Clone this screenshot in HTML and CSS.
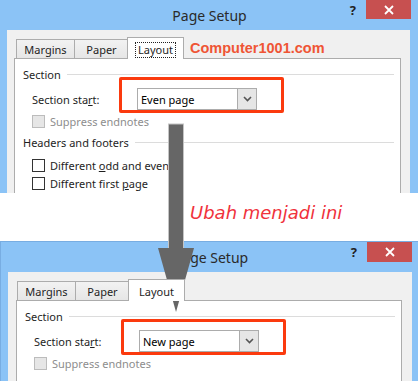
FILE: index.html
```html
<!DOCTYPE html>
<html>
<head>
<meta charset="utf-8">
<link rel="stylesheet" href="styles.css">
</head>
<body>
    <div class="dialog upper">
        <div class="titlebar">
            <span class="title">Page Setup</span>
            <div class="controls">
                <span class="help">?</span>
                <span class="close">
                    <svg width="10" height="10" viewBox="0 0 10 10"><path d="M1 1 L9 9 M9 1 L1 9" stroke="#fff" stroke-width="1.8"/></svg>
                </span>
            </div>
        </div>
        <div class="frame">
            <div class="tabs">
                <div class="tab margins">Margins</div>
                <div class="tab paper">Paper</div>
                <div class="tab active"><span class="focus">Layout</span></div>
                <div class="brand">Computer1001.com</div>
            </div>
            <div class="panel">
                <div class="group">Section</div>
                <div class="row">
                    <span class="label">Section sta<u>r</u>t:</span>
                    <div class="select">
                        <span class="value">Even page</span>
                        <span class="drop"><svg width="9" height="6" viewBox="0 0 9 6"><path d="M1 1 L4.5 4.5 L8 1" fill="none" stroke="#555" stroke-width="1.6"/></svg></span>
                        <div class="highlight"></div>
                    </div>
                </div>
                <div class="check disabled"><span class="box"></span><span>Suppress endnotes</span></div>
                <div class="group second">Headers and footers</div>
                <div class="check odd"><span class="box"></span><span>Different <u>o</u>dd and even</span></div>
                <div class="check first"><span class="box"></span><span>Different first <u>p</u>age</span></div>
            </div>
        </div>
    </div>

    <div class="note">Ubah menjadi ini</div>

    <div class="dialog lower">
        <div class="titlebar">
            <span class="title">Page Setup</span>
            <div class="controls">
                <span class="help">?</span>
                <span class="close">
                    <svg width="10" height="10" viewBox="0 0 10 10"><path d="M1 1 L9 9 M9 1 L1 9" stroke="#fff" stroke-width="1.8"/></svg>
                </span>
            </div>
        </div>
        <div class="frame">
            <div class="tabs">
                <div class="tab margins">Margins</div>
                <div class="tab paper">Paper</div>
                <div class="tab active"><span class="plain">Layout</span></div>
            </div>
            <div class="panel">
                <div class="group">Section</div>
                <div class="row">
                    <span class="label">Section sta<u>r</u>t:</span>
                    <div class="select">
                        <span class="value">New page</span>
                        <span class="drop"><svg width="9" height="6" viewBox="0 0 9 6"><path d="M1 1 L4.5 4.5 L8 1" fill="none" stroke="#555" stroke-width="1.6"/></svg></span>
                        <div class="highlight"></div>
                    </div>
                </div>
                <div class="check disabled"><span class="box"></span><span>Suppress endnotes</span></div>
            </div>
        </div>
    </div>

    <svg class="arrow" width="40" height="192" viewBox="0 0 40 192">
        <rect x="12.5" y="2" width="15" height="126" fill="#666" stroke="#c4c4c4" stroke-width="1"/>
        <polygon points="2,126 38,126 20,190" fill="#666"/>
    </svg>
</body>
</html>
```

FILE: styles.css
```css
body {
    margin: 0;
    width: 418px;
    height: 381px;
    overflow: hidden;
    position: relative;
    background: #fff;
    font-family: "Noto Sans", "Open Sans", sans-serif;
    font-size: 11px;
    color: #1e1e1e;
}

.dialog {
    background: #8bc3f6;
    overflow: hidden;
}
.dialog.upper {
    height: 193px;
    padding: 0 8px 0 7px;
}
.dialog.lower {
    height: 139px;
    border-top: 1px solid #78ade2;
    border-left: 1px solid #78ade2;
    padding: 0 6px 0 7px;
}

.titlebar {
    height: 30px;
    display: grid;
    grid-template-columns: 1fr auto 1fr;
    align-items: center;
}
.title {
    grid-column: 2;
    font-size: 14px;
    color: #2a2a2a;
    padding-left: 2px;
}
.controls {
    grid-column: 3;
    align-self: start;
    display: flex;
    justify-content: flex-end;
    align-items: flex-start;
}
.help {
    font-weight: bold;
    font-size: 13px;
    line-height: 20px;
    color: #222;
    margin-right: 10px;
}
.close {
    width: 45px;
    height: 19px;
    background: #c75050;
    display: flex;
    align-items: center;
    justify-content: center;
    margin-right: -1px;
}
.lower .close {
    height: 20px;
    margin-right: 0;
}

.frame {
    background: #f0f0f0;
    padding: 7px 9px 0 7px;
    height: 200px;
}
.lower .frame {
    padding: 7px 10px 0 8px;
}

.tabs {
    display: flex;
    align-items: flex-end;
    height: 21px;
    padding-left: 2px;
}
.lower .tabs {
    padding-left: 1px;
}
.tab {
    height: 19px;
    line-height: 19px;
    border: 1px solid #acacac;
    border-bottom: none;
    box-sizing: border-box;
    text-align: center;
    background: linear-gradient(#f2f2f2, #e6e6e6);
}
.tab.margins {
    width: 59px;
}
.tab.paper {
    width: 55px;
    margin-left: -1px;
}
.tab.active {
    width: 57px;
    height: 22px;
    margin-left: -2px;
    margin-bottom: -1px;
    background: #fff;
    z-index: 1;
    display: flex;
    justify-content: center;
    padding-top: 4px;
}
.focus {
    border: 1px dotted #222;
    line-height: 14px;
    height: 14px;
    padding: 0 2px;
}
.plain {
    line-height: 14px;
    padding-top: 1px;
}
.brand {
    margin-left: 6px;
    margin-bottom: 2px;
    font-family: "Liberation Sans", Arial, sans-serif;
    font-weight: bold;
    font-size: 14.5px;
    line-height: 16px;
    color: #ef5535;
}

.panel {
    background: #fff;
    border: 1px solid #acacac;
    padding: 8px 6px 0 8px;
    height: 200px;
}

.group {
    display: flex;
    align-items: center;
    gap: 6px;
    height: 16px;
    line-height: 16px;
}
.group::after {
    content: "";
    flex: 1;
    border-top: 1px solid #dcdcdc;
    margin-top: -1px;
}
.group.second {
    margin-top: 6px;
}

.row {
    display: flex;
    align-items: center;
    height: 22px;
    margin-top: 5px;
    padding-left: 9px;
}
.label {
    width: 105px;
}
.select {
    position: relative;
    width: 120px;
    height: 22px;
    box-sizing: border-box;
    border: 1px solid #acacac;
    display: flex;
    align-items: center;
}
.value {
    flex: 1;
    padding-left: 3px;
    color: #000;
}
.drop {
    width: 18px;
    height: 20px;
    background: #e6e6e6;
    border-left: 1px solid #acacac;
    display: flex;
    align-items: center;
    justify-content: center;
}
.highlight {
    position: absolute;
    top: -12px;
    left: -19px;
    right: -28px;
    bottom: -4px;
    border: 3px solid #fb3a0e;
    border-radius: 2px;
}

.check {
    display: flex;
    align-items: center;
    height: 16px;
    padding-left: 9px;
    margin-top: 3px;
    white-space: nowrap;
}
.check.odd {
    margin-top: 6px;
}
.check.first {
    margin-top: 2px;
}
.box {
    width: 13px;
    height: 13px;
    box-sizing: border-box;
    border: 1px solid #333;
    background: #fff;
    margin-right: 5px;
}
.check.disabled {
    color: #8d8d8d;
}
.check.disabled .box {
    border-color: #bcbcbc;
    background: #e6e6e6;
}

.note {
    height: 48px;
    box-sizing: border-box;
    padding: 8px 0 0 190px;
    font-family: "DejaVu Sans", sans-serif;
    font-style: oblique;
    font-size: 18px;
    line-height: 24px;
    color: #f0323c;
}

.arrow {
    position: absolute;
    left: 156px;
    top: 122px;
}
```
